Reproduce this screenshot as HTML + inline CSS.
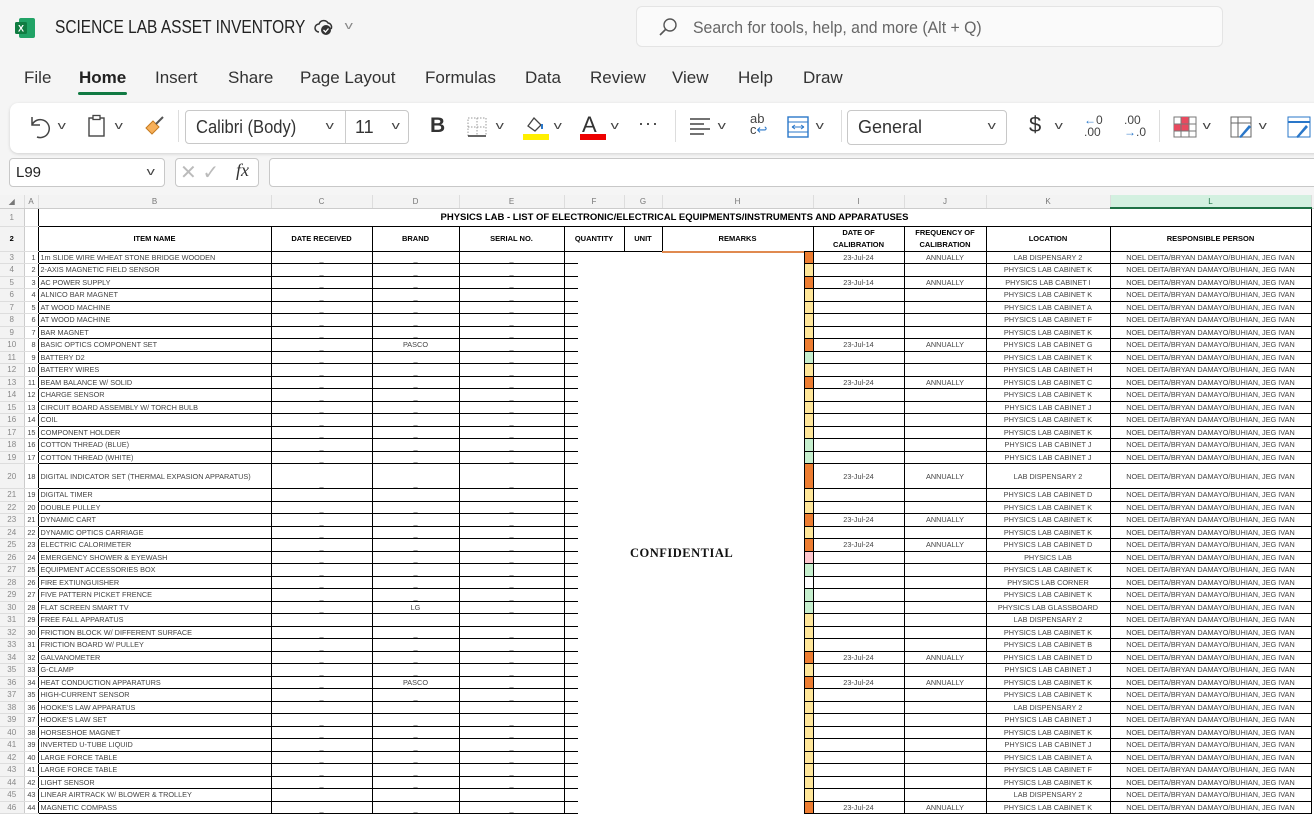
<!DOCTYPE html>
<html><head><meta charset="utf-8"><style>
*{box-sizing:border-box;margin:0;padding:0}
body{width:1314px;height:816px;overflow:hidden;background:#f5f5f5;font-family:"Liberation Sans",sans-serif;position:relative}
.abs{position:absolute}
.tab{position:absolute;top:68px;font-size:17px;color:#333}
.rib{position:absolute;left:10px;top:103px;width:1320px;height:50px;background:#fff;border-radius:8px;box-shadow:0 1px 3px rgba(0,0,0,.15)}
.box{position:absolute;border:1px solid #c8c8c8;border-radius:4px;background:#fff}
.chev{position:absolute;font-size:11px;color:#444;transform:scaleX(1.5)}
.sep{position:absolute;top:110px;width:1px;height:32px;background:#ddd}
#grid{position:absolute;left:0;top:195px;width:1314px;height:621px;background:#fff;overflow:hidden}
table{border-collapse:collapse;table-layout:fixed;position:absolute;left:0;top:0;width:1321px;font-family:"Liberation Sans",sans-serif}
td{font-size:7.3px;color:#444;white-space:nowrap;overflow:hidden;padding:0;border:1px solid #000;height:12.5px;line-height:11px;text-align:center}
tr.h td{height:13px;background:#f3f3f3;border:0;border-right:1px solid #ddd;border-bottom:1px solid #ccc;color:#777;font-size:8px}
td.rn{background:#f3f3f3;color:#888;border:0;border-bottom:1px solid #ddd;border-right:1px solid #ccc;font-size:8px;text-align:center}
td.a{border:0;border-bottom:1px solid #ddd;border-right:1px solid #000;text-align:right;padding-right:2px}
td.b{text-align:left;padding-left:2px}
td.d{vertical-align:bottom;line-height:9px}
tr.t td{font-weight:bold;color:#000;font-size:7.5px}
td.s{padding:0;border-left:0}
.O{background:#ed7d31}.Y{background:#ffe699}.G{background:#c6efce}.P{background:#ffc7ce}.W{background:#fff}
</style></head><body>
<svg class="abs" style="left:14px;top:17px" width="22" height="22" viewBox="0 0 22 22"><rect x="5" y="1" width="16" height="20" rx="2" fill="#21a366"/><rect x="1" y="5" width="12" height="12" rx="1.5" fill="#107c41"/><text x="4" y="14.5" font-size="9" fill="#fff" font-family="Liberation Sans" font-weight="bold">X</text></svg>
<div class="abs" style="left:55px;top:17px;font-size:18px;color:#222;transform:scaleX(0.86);transform-origin:left">SCIENCE LAB ASSET INVENTORY</div>
<svg class="abs" style="left:314px;top:19px" width="22" height="18" viewBox="0 0 22 18"><path d="M5 13a4 4 0 0 1 0-8 5 5 0 0 1 9-1 4 4 0 0 1 3 6" fill="none" stroke="#333" stroke-width="1.5"/><circle cx="12" cy="11" r="5" fill="#333"/><path d="M9.5 11l2 2 3-3.5" stroke="#fff" stroke-width="1.3" fill="none"/></svg>
<div class="chev" style="left:346px;top:20px;color:#888">v</div>
<div class="box" style="left:636px;top:6px;width:587px;height:41px;border-color:#e4e4e4;background:#fafafa;border-radius:6px"></div>
<svg class="abs" style="left:658px;top:17px" width="20" height="20" viewBox="0 0 20 20"><circle cx="12" cy="8" r="6" fill="none" stroke="#555" stroke-width="1.4"/><path d="M7.5 12.5L2 18" stroke="#555" stroke-width="1.6"/></svg>
<div class="abs" style="left:693px;top:18px;font-size:17px;color:#666;transform:scaleX(0.93);transform-origin:left">Search for tools, help, and more (Alt + Q)</div>
<div class="tab" style="left:24px">File</div>
<div class="tab" style="left:79px;font-weight:bold;color:#222">Home</div>
<div class="abs" style="left:78px;top:92px;width:49px;height:3px;background:#117a43;border-radius:2px"></div>
<div class="tab" style="left:155px">Insert</div>
<div class="tab" style="left:228px">Share</div>
<div class="tab" style="left:300px">Page Layout</div>
<div class="tab" style="left:425px">Formulas</div>
<div class="tab" style="left:525px">Data</div>
<div class="tab" style="left:590px">Review</div>
<div class="tab" style="left:672px">View</div>
<div class="tab" style="left:738px">Help</div>
<div class="tab" style="left:803px">Draw</div>
<div class="rib"></div>
<svg class="abs" style="left:27px;top:114px" width="24" height="26" viewBox="0 0 24 26"><path d="M5 3v8h8M5 11a9 9 0 1 1 5 12" fill="none" stroke="#444" stroke-width="1.5"/></svg>
<div class="chev" style="left:59px;top:120px">v</div>
<svg class="abs" style="left:87px;top:114px" width="20" height="24" viewBox="0 0 20 24"><rect x="2" y="4" width="15" height="18" fill="none" stroke="#444" stroke-width="1.4"/><rect x="6" y="1.5" width="7" height="4" fill="#fff" stroke="#444" stroke-width="1.3"/></svg>
<div class="chev" style="left:116px;top:120px">v</div>
<svg class="abs" style="left:143px;top:114px" width="24" height="24" viewBox="0 0 24 24"><path d="M3 14l7-7 6 6-7 7z" fill="#f7b05a" stroke="#c57a1f"/><path d="M13 10l7-7" stroke="#555" stroke-width="2"/></svg>
<div class="sep" style="left:178px"></div>
<div class="box" style="left:185px;top:110px;width:224px;height:34px"></div>
<div class="abs" style="left:345px;top:111px;width:1px;height:32px;background:#ccc"></div>
<div class="abs" style="left:196px;top:117px;font-size:18px;color:#333;transform:scaleX(0.92);transform-origin:left">Calibri (Body)</div>
<div class="chev" style="left:327px;top:120px">v</div>
<div class="abs" style="left:355px;top:117px;font-size:18px;color:#333">11</div>
<div class="chev" style="left:393px;top:120px">v</div>
<div class="abs" style="left:430px;top:114px;font-size:21px;font-weight:bold;color:#333">B</div>
<svg class="abs" style="left:466px;top:116px" width="22" height="22" viewBox="0 0 22 22"><rect x="2" y="2" width="18" height="18" fill="none" stroke="#999" stroke-dasharray="1.5 1.5"/><path d="M11 2v18M2 11h18" stroke="#999" stroke-dasharray="1.5 1.5"/><path d="M2 20h18" stroke="#333" stroke-width="1.5"/></svg>
<div class="chev" style="left:497px;top:120px">v</div>
<svg class="abs" style="left:523px;top:113px" width="26" height="28" viewBox="0 0 26 28"><path d="M5 13l6-8 7 7-6 6z" fill="none" stroke="#444" stroke-width="1.3"/><path d="M19 11v5" stroke="#2a77c9" stroke-width="2"/><rect x="0" y="21" width="26" height="6" fill="#ffef00"/></svg>
<div class="chev" style="left:555px;top:120px">v</div>
<div class="abs" style="left:582px;top:112px;font-size:22px;color:#333">A</div>
<div class="abs" style="left:580px;top:134px;width:26px;height:6px;background:#e00"></div>
<div class="chev" style="left:612px;top:120px">v</div>
<div class="abs" style="left:638px;top:113px;font-size:18px;color:#333;letter-spacing:1px">···</div>
<div class="sep" style="left:675px"></div>
<svg class="abs" style="left:688px;top:116px" width="24" height="22" viewBox="0 0 24 22"><path d="M2 3h20M2 8h14M2 13h20M2 18h14" stroke="#444" stroke-width="1.4"/></svg>
<div class="chev" style="left:719px;top:120px">v</div>
<div class="abs" style="left:750px;top:113px;font-size:13px;color:#444;line-height:11px">ab<br>c<span style="color:#2a77c9">↩</span></div>
<svg class="abs" style="left:787px;top:116px" width="22" height="22" viewBox="0 0 22 22"><rect x="1" y="1" width="20" height="20" fill="none" stroke="#2a77c9" stroke-width="1.4"/><path d="M1 6h20M1 16h20" stroke="#2a77c9"/><path d="M5 11h12M5 11l3-2M5 11l3 2M17 11l-3-2M17 11l-3 2" stroke="#2a77c9"/></svg>
<div class="chev" style="left:817px;top:120px">v</div>
<div class="sep" style="left:841px"></div>
<div class="box" style="left:847px;top:110px;width:160px;height:35px"></div>
<div class="abs" style="left:858px;top:117px;font-size:18px;color:#333">General</div>
<div class="chev" style="left:989px;top:120px">v</div>
<div class="abs" style="left:1029px;top:112px;font-size:22px;color:#333">$</div>
<div class="chev" style="left:1056px;top:120px">v</div>
<div class="abs" style="left:1084px;top:114px;font-size:12px;color:#444;line-height:12px"><span style="color:#2a77c9">←</span>0<br>.00</div>
<div class="abs" style="left:1124px;top:114px;font-size:12px;color:#444;line-height:12px">.00<br><span style="color:#2a77c9">→</span>.0</div>
<div class="sep" style="left:1159px"></div>
<svg class="abs" style="left:1173px;top:116px" width="24" height="22" viewBox="0 0 24 22"><rect x="1" y="1" width="22" height="20" fill="#fff" stroke="#777"/><rect x="8" y="1" width="8" height="14" fill="#e84a5f"/><rect x="1" y="8" width="7" height="7" fill="#e84a5f"/><path d="M1 8h22M1 15h22M8 1v20M16 1v20" stroke="#777"/></svg>
<div class="chev" style="left:1204px;top:120px">v</div>
<svg class="abs" style="left:1230px;top:116px" width="24" height="24" viewBox="0 0 24 24"><rect x="1" y="1" width="20" height="20" fill="none" stroke="#666"/><path d="M1 7h20M8 1v20" stroke="#666"/><path d="M9 21l10-12 2 2-10 11z" fill="#2a77c9"/></svg>
<div class="chev" style="left:1260px;top:120px">v</div>
<svg class="abs" style="left:1287px;top:116px" width="24" height="24" viewBox="0 0 24 24"><rect x="1" y="1" width="22" height="20" fill="none" stroke="#2a77c9"/><path d="M1 6h22" stroke="#2a77c9" stroke-width="2"/><path d="M9 21l10-12 2 2-10 11z" fill="#2a77c9"/></svg>
<div class="box" style="left:9px;top:158px;width:156px;height:29px"></div>
<div class="abs" style="left:16px;top:164px;font-size:15px;color:#222">L99</div>
<div class="chev" style="left:148px;top:166px">v</div>
<div class="box" style="left:175px;top:158px;width:84px;height:29px"></div>
<div class="abs" style="left:180px;top:160px;font-size:20px;color:#bbb">✕ ✓</div>
<div class="abs" style="left:236px;top:160px;font-size:18px;font-style:italic;font-family:'Liberation Serif',serif;color:#333">fx</div>
<div class="box" style="left:269px;top:158px;width:1060px;height:29px"></div>
<div id="grid">
<table>
<colgroup><col style="width:24px"><col style="width:14px"><col style="width:233px"><col style="width:101px"><col style="width:87px"><col style="width:105px"><col style="width:60px"><col style="width:38px"><col style="width:142px"><col style="width:9px"><col style="width:91px"><col style="width:82px"><col style="width:124px"><col style="width:201px"><col style="width:10px"></colgroup>
<tr class="h"><td>◢</td><td>A</td><td>B</td><td>C</td><td>D</td><td>E</td><td>F</td><td>G</td><td colspan="2">H</td><td>I</td><td>J</td><td>K</td><td style="background:#d3f0e0;border-bottom:2px solid #1e7145;color:#1e7145">L</td><td></td></tr>
<tr style="height:18px"><td class="rn">1</td><td class="a" style="border-right:1px solid #000"></td><td colspan="12" style="font-weight:bold;color:#000;font-size:9.5px;border-bottom:1px solid #000;height:18px">PHYSICS LAB - LIST OF ELECTRONIC/ELECTRICAL EQUIPMENTS/INSTRUMENTS AND APPARATUSES</td><td style="border:0"></td></tr>
<tr class="t"><td class="rn" style="height:25px">2</td><td class="a"></td><td>ITEM NAME</td><td>DATE RECEIVED</td><td>BRAND</td><td>SERIAL NO.</td><td>QUANTITY</td><td>UNIT</td><td colspan="2">REMARKS</td><td style="line-height:12px">DATE OF<br>CALIBRATION</td><td style="line-height:12px">FREQUENCY OF<br>CALIBRATION</td><td>LOCATION</td><td>RESPONSIBLE PERSON</td><td style="border:0"></td></tr>
<tr><td class="rn">3</td><td class="a">1</td><td class="b">1m SLIDE WIRE WHEAT STONE BRIDGE WOODEN</td><td class="d">_</td><td class="d">_</td><td class="d">_</td><td></td><td></td><td></td><td class="s O"></td><td>23-Jul-24</td><td>ANNUALLY</td><td>LAB DISPENSARY 2</td><td>NOEL DEITA/BRYAN DAMAYO/BUHIAN, JEG IVAN</td><td style="border:0"></td></tr>
<tr><td class="rn">4</td><td class="a">2</td><td class="b">2-AXIS MAGNETIC FIELD SENSOR</td><td class="d">_</td><td class="d">_</td><td class="d">_</td><td></td><td></td><td></td><td class="s Y"></td><td></td><td></td><td>PHYSICS LAB CABINET K</td><td>NOEL DEITA/BRYAN DAMAYO/BUHIAN, JEG IVAN</td><td style="border:0"></td></tr>
<tr><td class="rn">5</td><td class="a">3</td><td class="b">AC POWER SUPPLY</td><td class="d">_</td><td class="d">_</td><td class="d">_</td><td></td><td></td><td></td><td class="s O"></td><td>23-Jul-14</td><td>ANNUALLY</td><td>PHYSICS LAB CABINET I</td><td>NOEL DEITA/BRYAN DAMAYO/BUHIAN, JEG IVAN</td><td style="border:0"></td></tr>
<tr><td class="rn">6</td><td class="a">4</td><td class="b">ALNICO BAR MAGNET</td><td class="d">_</td><td class="d">_</td><td class="d">_</td><td></td><td></td><td></td><td class="s Y"></td><td></td><td></td><td>PHYSICS LAB CABINET K</td><td>NOEL DEITA/BRYAN DAMAYO/BUHIAN, JEG IVAN</td><td style="border:0"></td></tr>
<tr><td class="rn">7</td><td class="a">5</td><td class="b">AT WOOD MACHINE</td><td class="d">_</td><td class="d">_</td><td class="d">_</td><td></td><td></td><td></td><td class="s Y"></td><td></td><td></td><td>PHYSICS LAB CABINET A</td><td>NOEL DEITA/BRYAN DAMAYO/BUHIAN, JEG IVAN</td><td style="border:0"></td></tr>
<tr><td class="rn">8</td><td class="a">6</td><td class="b">AT WOOD MACHINE</td><td class="d">_</td><td class="d">_</td><td class="d">_</td><td></td><td></td><td></td><td class="s Y"></td><td></td><td></td><td>PHYSICS LAB CABINET F</td><td>NOEL DEITA/BRYAN DAMAYO/BUHIAN, JEG IVAN</td><td style="border:0"></td></tr>
<tr><td class="rn">9</td><td class="a">7</td><td class="b">BAR MAGNET</td><td class="d">_</td><td class="d">_</td><td class="d">_</td><td></td><td></td><td></td><td class="s Y"></td><td></td><td></td><td>PHYSICS LAB CABINET K</td><td>NOEL DEITA/BRYAN DAMAYO/BUHIAN, JEG IVAN</td><td style="border:0"></td></tr>
<tr><td class="rn">10</td><td class="a">8</td><td class="b">BASIC OPTICS COMPONENT SET</td><td class="d">_</td><td>PASCO</td><td class="d">_</td><td></td><td></td><td></td><td class="s O"></td><td>23-Jul-14</td><td>ANNUALLY</td><td>PHYSICS LAB CABINET G</td><td>NOEL DEITA/BRYAN DAMAYO/BUHIAN, JEG IVAN</td><td style="border:0"></td></tr>
<tr><td class="rn">11</td><td class="a">9</td><td class="b">BATTERY D2</td><td class="d">_</td><td class="d">_</td><td class="d">_</td><td></td><td></td><td></td><td class="s G"></td><td></td><td></td><td>PHYSICS LAB CABINET K</td><td>NOEL DEITA/BRYAN DAMAYO/BUHIAN, JEG IVAN</td><td style="border:0"></td></tr>
<tr><td class="rn">12</td><td class="a">10</td><td class="b">BATTERY WIRES</td><td class="d">_</td><td class="d">_</td><td class="d">_</td><td></td><td></td><td></td><td class="s Y"></td><td></td><td></td><td>PHYSICS LAB CABINET H</td><td>NOEL DEITA/BRYAN DAMAYO/BUHIAN, JEG IVAN</td><td style="border:0"></td></tr>
<tr><td class="rn">13</td><td class="a">11</td><td class="b">BEAM BALANCE W/ SOLID</td><td class="d">_</td><td class="d">_</td><td class="d">_</td><td></td><td></td><td></td><td class="s O"></td><td>23-Jul-24</td><td>ANNUALLY</td><td>PHYSICS LAB CABINET C</td><td>NOEL DEITA/BRYAN DAMAYO/BUHIAN, JEG IVAN</td><td style="border:0"></td></tr>
<tr><td class="rn">14</td><td class="a">12</td><td class="b">CHARGE SENSOR</td><td class="d">_</td><td class="d">_</td><td class="d">_</td><td></td><td></td><td></td><td class="s Y"></td><td></td><td></td><td>PHYSICS LAB CABINET K</td><td>NOEL DEITA/BRYAN DAMAYO/BUHIAN, JEG IVAN</td><td style="border:0"></td></tr>
<tr><td class="rn">15</td><td class="a">13</td><td class="b">CIRCUIT BOARD ASSEMBLY W/ TORCH BULB</td><td class="d">_</td><td class="d">_</td><td class="d">_</td><td></td><td></td><td></td><td class="s Y"></td><td></td><td></td><td>PHYSICS LAB CABINET J</td><td>NOEL DEITA/BRYAN DAMAYO/BUHIAN, JEG IVAN</td><td style="border:0"></td></tr>
<tr><td class="rn">16</td><td class="a">14</td><td class="b">COIL</td><td class="d">_</td><td class="d">_</td><td class="d">_</td><td></td><td></td><td></td><td class="s Y"></td><td></td><td></td><td>PHYSICS LAB CABINET K</td><td>NOEL DEITA/BRYAN DAMAYO/BUHIAN, JEG IVAN</td><td style="border:0"></td></tr>
<tr><td class="rn">17</td><td class="a">15</td><td class="b">COMPONENT HOLDER</td><td class="d">_</td><td class="d">_</td><td class="d">_</td><td></td><td></td><td></td><td class="s Y"></td><td></td><td></td><td>PHYSICS LAB CABINET K</td><td>NOEL DEITA/BRYAN DAMAYO/BUHIAN, JEG IVAN</td><td style="border:0"></td></tr>
<tr><td class="rn">18</td><td class="a">16</td><td class="b">COTTON THREAD (BLUE)</td><td class="d">_</td><td class="d">_</td><td class="d">_</td><td></td><td></td><td></td><td class="s G"></td><td></td><td></td><td>PHYSICS LAB CABINET J</td><td>NOEL DEITA/BRYAN DAMAYO/BUHIAN, JEG IVAN</td><td style="border:0"></td></tr>
<tr><td class="rn">19</td><td class="a">17</td><td class="b">COTTON THREAD (WHITE)</td><td class="d">_</td><td class="d">_</td><td class="d">_</td><td></td><td></td><td></td><td class="s G"></td><td></td><td></td><td>PHYSICS LAB CABINET J</td><td>NOEL DEITA/BRYAN DAMAYO/BUHIAN, JEG IVAN</td><td style="border:0"></td></tr>
<tr><td class="rn" style="height:25px">20</td><td class="a">18</td><td class="b">DIGITAL INDICATOR SET (THERMAL EXPASION APPARATUS)</td><td class="d">_</td><td class="d">_</td><td class="d">_</td><td></td><td></td><td></td><td class="s O"></td><td>23-Jul-24</td><td>ANNUALLY</td><td>LAB DISPENSARY 2</td><td>NOEL DEITA/BRYAN DAMAYO/BUHIAN, JEG IVAN</td><td style="border:0"></td></tr>
<tr><td class="rn">21</td><td class="a">19</td><td class="b">DIGITAL TIMER</td><td></td><td></td><td></td><td></td><td></td><td></td><td class="s Y"></td><td></td><td></td><td>PHYSICS LAB CABINET D</td><td>NOEL DEITA/BRYAN DAMAYO/BUHIAN, JEG IVAN</td><td style="border:0"></td></tr>
<tr><td class="rn">22</td><td class="a">20</td><td class="b">DOUBLE PULLEY</td><td class="d">_</td><td class="d">_</td><td class="d">_</td><td></td><td></td><td></td><td class="s Y"></td><td></td><td></td><td>PHYSICS LAB CABINET K</td><td>NOEL DEITA/BRYAN DAMAYO/BUHIAN, JEG IVAN</td><td style="border:0"></td></tr>
<tr><td class="rn">23</td><td class="a">21</td><td class="b">DYNAMIC CART</td><td class="d">_</td><td class="d">_</td><td class="d">_</td><td></td><td></td><td></td><td class="s O"></td><td>23-Jul-24</td><td>ANNUALLY</td><td>PHYSICS LAB CABINET K</td><td>NOEL DEITA/BRYAN DAMAYO/BUHIAN, JEG IVAN</td><td style="border:0"></td></tr>
<tr><td class="rn">24</td><td class="a">22</td><td class="b">DYNAMIC OPTICS CARRIAGE</td><td class="d">_</td><td class="d">_</td><td class="d">_</td><td></td><td></td><td></td><td class="s Y"></td><td></td><td></td><td>PHYSICS LAB CABINET K</td><td>NOEL DEITA/BRYAN DAMAYO/BUHIAN, JEG IVAN</td><td style="border:0"></td></tr>
<tr><td class="rn">25</td><td class="a">23</td><td class="b">ELECTRIC CALORIMETER</td><td class="d">_</td><td class="d">_</td><td class="d">_</td><td></td><td></td><td></td><td class="s O"></td><td>23-Jul-24</td><td>ANNUALLY</td><td>PHYSICS LAB CABINET D</td><td>NOEL DEITA/BRYAN DAMAYO/BUHIAN, JEG IVAN</td><td style="border:0"></td></tr>
<tr><td class="rn">26</td><td class="a">24</td><td class="b">EMERGENCY SHOWER &amp; EYEWASH</td><td class="d">_</td><td class="d">_</td><td class="d">_</td><td></td><td></td><td></td><td class="s P"></td><td></td><td></td><td>PHYSICS LAB</td><td>NOEL DEITA/BRYAN DAMAYO/BUHIAN, JEG IVAN</td><td style="border:0"></td></tr>
<tr><td class="rn">27</td><td class="a">25</td><td class="b">EQUIPMENT ACCESSORIES BOX</td><td class="d">_</td><td class="d">_</td><td class="d">_</td><td></td><td></td><td></td><td class="s G"></td><td></td><td></td><td>PHYSICS LAB CABINET K</td><td>NOEL DEITA/BRYAN DAMAYO/BUHIAN, JEG IVAN</td><td style="border:0"></td></tr>
<tr><td class="rn">28</td><td class="a">26</td><td class="b">FIRE EXTIUNGUISHER</td><td class="d">_</td><td class="d">_</td><td class="d">_</td><td></td><td></td><td></td><td class="s W"></td><td></td><td></td><td>PHYSICS LAB CORNER</td><td>NOEL DEITA/BRYAN DAMAYO/BUHIAN, JEG IVAN</td><td style="border:0"></td></tr>
<tr><td class="rn">29</td><td class="a">27</td><td class="b">FIVE PATTERN PICKET FRENCE</td><td class="d">_</td><td class="d">_</td><td class="d">_</td><td></td><td></td><td></td><td class="s G"></td><td></td><td></td><td>PHYSICS LAB CABINET K</td><td>NOEL DEITA/BRYAN DAMAYO/BUHIAN, JEG IVAN</td><td style="border:0"></td></tr>
<tr><td class="rn">30</td><td class="a">28</td><td class="b">FLAT SCREEN SMART TV</td><td class="d">_</td><td>LG</td><td class="d">_</td><td></td><td></td><td></td><td class="s G"></td><td></td><td></td><td>PHYSICS LAB GLASSBOARD</td><td>NOEL DEITA/BRYAN DAMAYO/BUHIAN, JEG IVAN</td><td style="border:0"></td></tr>
<tr><td class="rn">31</td><td class="a">29</td><td class="b">FREE FALL APPARATUS</td><td></td><td></td><td></td><td></td><td></td><td></td><td class="s Y"></td><td></td><td></td><td>LAB DISPENSARY 2</td><td>NOEL DEITA/BRYAN DAMAYO/BUHIAN, JEG IVAN</td><td style="border:0"></td></tr>
<tr><td class="rn">32</td><td class="a">30</td><td class="b">FRICTION BLOCK W/ DIFFERENT SURFACE</td><td class="d">_</td><td class="d">_</td><td class="d">_</td><td></td><td></td><td></td><td class="s Y"></td><td></td><td></td><td>PHYSICS LAB CABINET K</td><td>NOEL DEITA/BRYAN DAMAYO/BUHIAN, JEG IVAN</td><td style="border:0"></td></tr>
<tr><td class="rn">33</td><td class="a">31</td><td class="b">FRICTION BOARD W/ PULLEY</td><td class="d">_</td><td class="d">_</td><td class="d">_</td><td></td><td></td><td></td><td class="s Y"></td><td></td><td></td><td>PHYSICS LAB CABINET B</td><td>NOEL DEITA/BRYAN DAMAYO/BUHIAN, JEG IVAN</td><td style="border:0"></td></tr>
<tr><td class="rn">34</td><td class="a">32</td><td class="b">GALVANOMETER</td><td class="d">_</td><td class="d">_</td><td class="d">_</td><td></td><td></td><td></td><td class="s O"></td><td>23-Jul-24</td><td>ANNUALLY</td><td>PHYSICS LAB CABINET D</td><td>NOEL DEITA/BRYAN DAMAYO/BUHIAN, JEG IVAN</td><td style="border:0"></td></tr>
<tr><td class="rn">35</td><td class="a">33</td><td class="b">G-CLAMP</td><td class="d">_</td><td class="d">_</td><td class="d">_</td><td></td><td></td><td></td><td class="s Y"></td><td></td><td></td><td>PHYSICS LAB CABINET J</td><td>NOEL DEITA/BRYAN DAMAYO/BUHIAN, JEG IVAN</td><td style="border:0"></td></tr>
<tr><td class="rn">36</td><td class="a">34</td><td class="b">HEAT CONDUCTION APPARATURS</td><td class="d">_</td><td>PASCO</td><td class="d">_</td><td></td><td></td><td></td><td class="s O"></td><td>23-Jul-24</td><td>ANNUALLY</td><td>PHYSICS LAB CABINET K</td><td>NOEL DEITA/BRYAN DAMAYO/BUHIAN, JEG IVAN</td><td style="border:0"></td></tr>
<tr><td class="rn">37</td><td class="a">35</td><td class="b">HIGH-CURRENT SENSOR</td><td class="d">_</td><td class="d">_</td><td class="d">_</td><td></td><td></td><td></td><td class="s Y"></td><td></td><td></td><td>PHYSICS LAB CABINET K</td><td>NOEL DEITA/BRYAN DAMAYO/BUHIAN, JEG IVAN</td><td style="border:0"></td></tr>
<tr><td class="rn">38</td><td class="a">36</td><td class="b">HOOKE'S LAW APPARATUS</td><td></td><td></td><td></td><td></td><td></td><td></td><td class="s Y"></td><td></td><td></td><td>LAB DISPENSARY 2</td><td>NOEL DEITA/BRYAN DAMAYO/BUHIAN, JEG IVAN</td><td style="border:0"></td></tr>
<tr><td class="rn">39</td><td class="a">37</td><td class="b">HOOKE'S LAW SET</td><td class="d">_</td><td class="d">_</td><td class="d">_</td><td></td><td></td><td></td><td class="s Y"></td><td></td><td></td><td>PHYSICS LAB CABINET J</td><td>NOEL DEITA/BRYAN DAMAYO/BUHIAN, JEG IVAN</td><td style="border:0"></td></tr>
<tr><td class="rn">40</td><td class="a">38</td><td class="b">HORSESHOE MAGNET</td><td class="d">_</td><td class="d">_</td><td class="d">_</td><td></td><td></td><td></td><td class="s Y"></td><td></td><td></td><td>PHYSICS LAB CABINET K</td><td>NOEL DEITA/BRYAN DAMAYO/BUHIAN, JEG IVAN</td><td style="border:0"></td></tr>
<tr><td class="rn">41</td><td class="a">39</td><td class="b">INVERTED U-TUBE LIQUID</td><td class="d">_</td><td class="d">_</td><td class="d">_</td><td></td><td></td><td></td><td class="s Y"></td><td></td><td></td><td>PHYSICS LAB CABINET J</td><td>NOEL DEITA/BRYAN DAMAYO/BUHIAN, JEG IVAN</td><td style="border:0"></td></tr>
<tr><td class="rn">42</td><td class="a">40</td><td class="b">LARGE FORCE TABLE</td><td class="d">_</td><td class="d">_</td><td class="d">_</td><td></td><td></td><td></td><td class="s Y"></td><td></td><td></td><td>PHYSICS LAB CABINET A</td><td>NOEL DEITA/BRYAN DAMAYO/BUHIAN, JEG IVAN</td><td style="border:0"></td></tr>
<tr><td class="rn">43</td><td class="a">41</td><td class="b">LARGE FORCE TABLE</td><td class="d">_</td><td class="d">_</td><td class="d">_</td><td></td><td></td><td></td><td class="s Y"></td><td></td><td></td><td>PHYSICS LAB CABINET F</td><td>NOEL DEITA/BRYAN DAMAYO/BUHIAN, JEG IVAN</td><td style="border:0"></td></tr>
<tr><td class="rn">44</td><td class="a">42</td><td class="b">LIGHT SENSOR</td><td class="d">_</td><td class="d">_</td><td class="d">_</td><td></td><td></td><td></td><td class="s Y"></td><td></td><td></td><td>PHYSICS LAB CABINET K</td><td>NOEL DEITA/BRYAN DAMAYO/BUHIAN, JEG IVAN</td><td style="border:0"></td></tr>
<tr><td class="rn">45</td><td class="a">43</td><td class="b">LINEAR AIRTRACK W/ BLOWER &amp; TROLLEY</td><td></td><td></td><td></td><td></td><td></td><td></td><td class="s Y"></td><td></td><td></td><td>LAB DISPENSARY 2</td><td>NOEL DEITA/BRYAN DAMAYO/BUHIAN, JEG IVAN</td><td style="border:0"></td></tr>
<tr><td class="rn">46</td><td class="a">44</td><td class="b">MAGNETIC COMPASS</td><td class="d">_</td><td class="d">_</td><td class="d">_</td><td></td><td></td><td></td><td class="s O"></td><td>23-Jul-24</td><td>ANNUALLY</td><td>PHYSICS LAB CABINET K</td><td>NOEL DEITA/BRYAN DAMAYO/BUHIAN, JEG IVAN</td><td style="border:0"></td></tr>
</table>
<div class="abs" style="left:578px;top:57px;width:226px;height:570px;background:#fff"></div>
<div class="abs" style="left:662px;top:56px;width:142px;height:2px;background:#e08a50"></div>
<div class="abs" style="left:630px;top:351px;font-family:'Liberation Serif',serif;font-weight:bold;font-size:12.5px;color:#111;letter-spacing:.5px">CONFIDENTIAL</div>
</div>
</body></html>
